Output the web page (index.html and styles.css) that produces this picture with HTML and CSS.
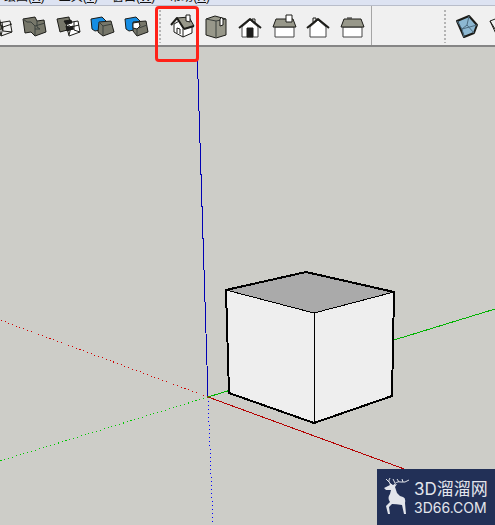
FILE: index.html
```html
<!DOCTYPE html>
<html lang="zh-CN">
<head>
<meta charset="utf-8">
<title>SketchUp</title>
<link rel="stylesheet" href="styles.css">
</head>
<body>
<nav class="menu">
  <a href="#">绘图(<u>R</u>)</a>
  <a href="#">工具(<u>T</u>)</a>
  <a href="#">窗口(<u>W</u>)</a>
  <a href="#">帮助(<u>H</u>)</a>
</nav>
<header class="toolbar">
  <div class="group solids">
    <button class="tool" aria-label="相交"><svg viewBox="0 5 34 40"><path class="stone" d="M6 18l10-2 3 12-11 2z"/><path class="wire" d="M15 22l12-2 2 11-11 4zM15 22l5 4 9-3M20 26l-2 9M19 21l1 9 9 1"/></svg></button>
    <button class="tool" aria-label="联合"><svg viewBox="0 5 34 40"><path class="stone" d="M6 18l12-2 2 4 7-1 2 12-11 4-4-4-6 1z"/><path class="edge" d="M6 18l4 3 4 0M14 21l4 4 10-3M18 25v9M20 20v6l3 2M18 28h5"/></svg></button>
    <button class="tool" aria-label="减去"><svg viewBox="0 5 34 40"><path class="stone" d="M6 18l12-2 2 12-11 3z"/><path class="hollow" d="M15 22l12-2 2 11-11 4z"/><path class="wire" d="M15 22l5 4 8-2M20 26l-2 8M23 21v8l6 2M15 29l8-1"/><path class="black" d="M13 20l7-1 1 3-6 1zM15 25l4 1 3-1v3l-6 2z"/></svg></button>
    <button class="tool" aria-label="修剪"><svg viewBox="0 5 34 40"><path class="blue" d="M6 18l11-2 4 4-1 8-10 2-3-2z"/><path class="stone" d="M14 21l12-1 3 11-11 4-5-4z"/><path class="edge" d="M14 21l4 4 9-2M18 25v9"/></svg></button>
    <button class="tool" aria-label="拆分"><svg viewBox="0 5 34 40"><path class="blue" d="M6 18l11-2 4 4-1 8-10 2-3-2z"/><path class="stone" d="M14 21l13-1 2 11-11 4-4-5z"/><path class="edge" d="M20 27l8-3M18 28v6"/><path class="white" d="M14 22l6-1 1 4-3 3-4-1z"/></svg></button>
  </div>
  <div class="group views">
    <span class="grip"></span>
    <button class="tool" aria-label="等轴"><svg viewBox="0 5 34 40"><path class="white" d="M9 23v8l9 5 9-4v-7l-9-7z"/><path class="roof" d="M12 17l12-1 5 9-10 3z"/><path class="eave" d="M6 24l6-7 7 11M19 28l10-3"/><path class="line" d="M18 28v8M12 32v-5l3 1v5"/><path class="white" d="M21 20v-6h4v7z"/></svg></button>
    <button class="tool" aria-label="俯视图"><svg viewBox="0 5 34 40"><path class="roof" d="M7 18l9-3 11 3v16l-10 3-10-3z"/><path class="edge" d="M17 20v16M7 18l10 2 10-2"/><path class="white" d="M21 18q2-3 3 0v6l-3 1z"/></svg></button>
    <button class="tool" aria-label="前视图"><svg viewBox="0 5 34 40"><path class="wall" d="M9 26l8-7 8 7v10H9z"/><path class="line" d="M19 19v-1h3v4"/><path class="eave" d="M6 27l11-9 11 9"/><path class="black" d="M14 27h6v9h-6z"/></svg></button>
    <button class="tool" aria-label="右视图"><svg viewBox="0 5 34 40"><path class="wall" d="M8 26h19v10H8z"/><path class="roof" d="M9 18h17l3 8H6z"/><path class="white" d="M19 14h6v7h-6z"/></svg></button>
    <button class="tool" aria-label="后视图"><svg viewBox="0 5 34 40"><path class="wall" d="M9 26l8-7 8 7v10H9z"/><path class="line" d="M12 21v-4h3v2"/><path class="eave" d="M6 27l11-9 11 9"/></svg></button>
    <button class="tool" aria-label="左视图"><svg viewBox="0 5 34 40"><path class="wall" d="M8 26h19v10H8z"/><path class="roof" d="M9 18h17l3 8H6z"/><path class="line" d="M12 17h5"/></svg></button>
  </div>
  <div class="group styles">
    <span class="grip"></span>
    <button class="tool" aria-label="X光透视模式"><svg viewBox="0 5 34 40"><path class="glass" d="M7 20l12-5 8 9-3 8-10 4z"/><path class="pane" d="M7 20l5 8 15-4M19 15l-2 9-5 4 2 8M17 24l7 8"/></svg></button>
    <button class="tool" aria-label="后边线"><svg viewBox="0 5 34 40"><path class="wire" d="M6 20l13-5 8 9-3 9-10 4zM6 20l5 8 16-4"/></svg></button>
  </div>
  <span class="highlight"></span>
</header>
<main class="viewport">
  <svg class="scene" viewBox="0 47 495 478" preserveAspectRatio="xMinYMin slice" shape-rendering="crispEdges">
    <g class="axes">
      <path class="axis-blue" d="M197 47L208 397"/>
      <path class="axis-blue dots" d="M208 397L213 525"/>
      <path class="axis-green" d="M208 397L495 309"/>
      <path class="axis-green dots" d="M208 397L0 461"/>
      <path class="axis-red" d="M208 397L407 470"/>
      <path class="axis-red dots" d="M208 397L0 320"/>
    </g>
    <path class="side" d="M226 290L314 313L394 292L392 396L314 423L229 393z"/>
    <path class="top" d="M226 290L306 272L394 292L314 313z"/>
    <path class="inner" d="M226 290L314 313L394 292M314 313V423"/>
    <path class="outline" d="M226 290L306 272L394 292L392 396L314 423L229 393z"/>
  </svg>
  <div class="brand">
    <svg class="deer" viewBox="0 0 28 38"><path class="deer-body" d="M1 10L7 7L6 5L10 7L14 6L12 9L14 15Q16 18 20 19Q23 20 22 25L23 36H21L19 27Q13 26 9 26L6 29L7 36H5L3 28L7 24Q4 20 7 16L8 12L3 12z"/><path class="antler" d="M9 7Q4 4 7 0M6 4L3 1M11 7Q13 3 18 4Q22 5 26 2M12 5L10 1M16 4L14 1M20 4L19 1"/></svg>
    <div class="brand-text">
      <strong class="brand-name">3D溜溜网</strong>
      <span class="brand-url">3D66.COM</span>
    </div>
  </div>
</main>
</body>
</html>
```
FILE: styles.css
```css
* { box-sizing: border-box; }
body {
  margin: 0;
  min-height: 100vh;
  display: flex;
  flex-direction: column;
  overflow: hidden;
  font-family: "Liberation Sans", "Noto Sans CJK SC", sans-serif;
}
.menu {
  height: 5px;
  flex: none;
  display: flex;
  align-items: flex-end;
  gap: 14px;
  padding-left: 4px;
  overflow: hidden;
  background: #dde3f2;
}
.menu a {
  flex: none;
  font-size: 12px;
  line-height: 16px;
  color: #111;
  text-decoration: none;
}
.toolbar {
  position: relative;
  flex: none;
  display: flex;
  height: 42px;
  background: #f0f0f0;
  border-top: 1px solid #b8bdca;
  border-bottom: 2px solid #858585;
}
.group { display: flex; align-items: center; }
.solids { margin-left: -17px; }
.views { margin-left: 2px; border-right: 1px solid #a5a5a5; padding-right: 2px; }
.styles { margin-left: auto; margin-right: -23px; }
.grip {
  width: 10px;
  height: 34px;
  background: radial-gradient(circle at 5px 2px, #b4b4b4 1px, transparent 1px) 0 0 / 10px 4px;
}
.tool {
  flex: none;
  width: 34px;
  height: 40px;
  padding: 0;
  border: 0;
  background: none;
}
.tool svg { display: block; width: 34px; height: 40px; }
.tool path { stroke: #1c1c18; stroke-width: 1; stroke-linejoin: round; fill: none; }
.tool .stone { fill: #77776a; }
.tool .roof { fill: #98988a; }
.tool .blue { fill: #168ee4; }
.tool .glass { fill: #8db8d2; stroke-width: 2; }
.tool .pane { stroke: #4d6c80; }
.tool .white, .tool .wall, .tool .hollow { fill: #fff; }
.tool .wall { stroke: #444; }
.tool .black { fill: #1c1c1c; }
.tool .eave { stroke-width: 2; }
.tool .edge { stroke: #3b403c; }
.highlight {
  position: absolute;
  left: 155px;
  top: 0;
  z-index: 2;
  width: 44px;
  height: 56px;
  border: 3px solid #ff2118;
  border-radius: 4px;
  pointer-events: none;
}
.viewport {
  position: relative;
  flex: 1;
  min-height: 0;
  background: #cdcdc8;
}
.scene { display: block; width: 100%; }
.scene path { fill: none; }
.axis-blue { stroke: #0000b4; }
.axis-green { stroke: #00b400; }
.axis-red { stroke: #b40000; }
.dots { stroke-dasharray: 1 3; }
.axis-blue.dots { stroke: #0000ff; }
.axis-green.dots { stroke: #00c800; }
.axis-red.dots { stroke: #d00000; }
.scene .side { fill: #eee; }
.scene .top { fill: #aaa; }
.inner { stroke: #000; }
.outline { stroke: #000; stroke-width: 2; }
.brand {
  position: absolute;
  right: 0;
  bottom: 0;
  display: flex;
  align-items: center;
  gap: 3px;
  width: 118px;
  height: 56px;
  padding-left: 6px;
  background: #223057;
  color: #e2e5ec;
}
.deer { flex: none; width: 28px; height: 38px; }
.deer-body { fill: #e2e5ec; }
.antler { fill: none; stroke: #e2e5ec; stroke-width: 1; }
.brand-text {
  display: flex;
  flex-direction: column;
  white-space: nowrap;
  font-family: Inter, "Noto Sans CJK SC", sans-serif;
}
.brand-name { font-size: 17px; line-height: 22px; font-weight: 400; }
.brand-url { font-size: 14px; line-height: 16px; }
```
